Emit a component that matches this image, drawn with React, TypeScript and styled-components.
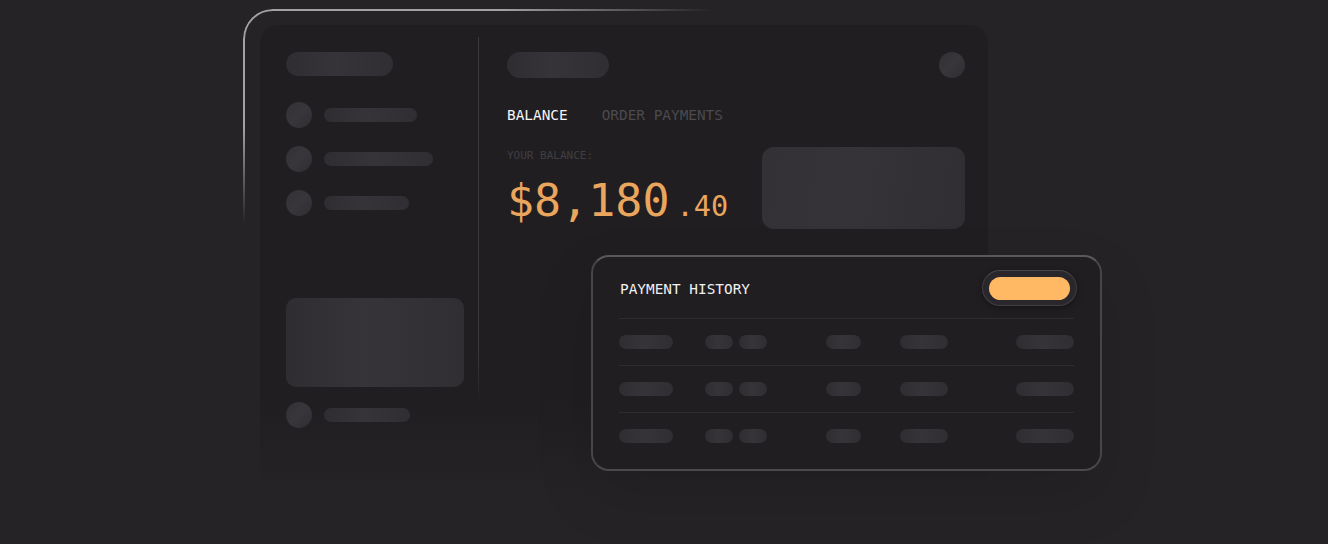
import React from "react";
import styled, { createGlobalStyle } from "styled-components";

const Global = createGlobalStyle`
  html, body { margin: 0; padding: 0; background: #252326; }
  body { font-family: "DejaVu Sans Mono", "Liberation Mono", monospace; }
  * { box-sizing: border-box; }
`;

const Stage = styled.div`
  position: relative;
  width: 1328px;
  height: 544px;
  overflow: hidden;
  background: #252326;
  padding: 9px 0 0 243px;
`;

const Frame = styled.div`
  position: relative;
  width: 762px;
  height: 520px;
  padding: 16px 17px 0 17px;
  border-radius: 30px;
  &::before {
    content: "";
    position: absolute;
    inset: 0;
    border-radius: 30px;
    border: 2px solid #a3a1a6;
    pointer-events: none;
    -webkit-mask-image: radial-gradient(ellipse 470px 215px at 0 0, #000 0%, #000 55%, transparent 100%);
    mask-image: radial-gradient(ellipse 470px 215px at 0 0, #000 0%, #000 55%, transparent 100%);
  }
`;

const Panel = styled.div`
  display: flex;
  width: 728px;
  height: 470px;
  border-radius: 18px;
  background: linear-gradient(to bottom, #201e21 0%, #201e21 80%, #252326 100%);
`;

const Sidebar = styled.div`
  width: 218px;
  flex-shrink: 0;
  display: flex;
  flex-direction: column;
  align-items: flex-start;
  padding: 27px 0 0 26px;
`;

const Divider = styled.div`
  width: 1px;
  height: 370px;
  margin-top: 12px;
  background: linear-gradient(to bottom, #3c3a3e 0%, #3a383c 85%, rgba(58, 56, 60, 0) 100%);
`;

const Skel = styled.div<{ $w: number; $h: number; $r?: number }>`
  width: ${(p) => p.$w}px;
  height: ${(p) => p.$h}px;
  border-radius: ${(p) => (p.$r !== undefined ? p.$r : p.$h / 2)}px;
  flex-shrink: 0;
  background: linear-gradient(90deg, #2f2d31 0%, #363438 45%, #302e32 100%);
  filter: blur(0.6px);
`;

const Dot = styled.div`
  width: 26px;
  height: 26px;
  border-radius: 50%;
  flex-shrink: 0;
  background: linear-gradient(135deg, #333135 0%, #38363a 50%, #2f2d31 100%);
  filter: blur(0.5px);
`;

const NavItem = styled.div<{ $mb?: number }>`
  display: flex;
  align-items: center;
  gap: 12px;
  height: 26px;
  margin-bottom: ${(p) => p.$mb ?? 18}px;
`;

const SideTitle = styled(Skel)`
  margin-bottom: 26px;
`;

const SideBlock = styled(Skel)`
  margin-bottom: 15px;
`;

const Main = styled.div`
  flex: 1;
  display: flex;
  flex-direction: column;
  padding: 27px 23px 0 28px;
`;

const Header = styled.div`
  display: flex;
  justify-content: space-between;
  align-items: center;
  height: 26px;
`;

const Tabs = styled.div`
  display: flex;
  gap: 34px;
  margin-top: 29px;
`;

const Tab = styled.span<{ $active?: boolean }>`
  font-size: 14.4px;
  line-height: 17px;
  color: ${(p) => (p.$active ? "#f6f5f7" : "#4c4a4e")};
`;

const BalanceRow = styled.div`
  display: flex;
  justify-content: space-between;
  align-items: flex-start;
  margin-top: 23px;
`;

const BalanceInfo = styled.div`
  display: flex;
  flex-direction: column;
  padding-top: 2px;
`;

const Label = styled.span`
  font-size: 11px;
  line-height: 13px;
  color: #403e42;
`;

const Amount = styled.div`
  margin-top: 17px;
  line-height: 44px;
  color: #eaa65d;
  white-space: nowrap;
`;

const Whole = styled.span`
  font-size: 45px;
`;

const Cents = styled.span`
  font-size: 28.5px;
  margin-left: 7px;
`;

const BalanceCard = styled.div`
  width: 203px;
  height: 82px;
  border-radius: 12px;
  background: linear-gradient(100deg, #333135 0%, #353337 45%, #302e32 100%);
  filter: blur(0.5px);
`;

const HistoryCard = styled.div`
  position: absolute;
  left: 591px;
  top: 255px;
  width: 511px;
  height: 216px;
  border-radius: 18px;
  border: 2px solid;
  border-color: #5a585c #47454a #4b494d #47454a;
  background: #201e21;
  padding: 13px 26px 0 26px;
  box-shadow: 0 24px 60px rgba(0, 0, 0, 0.12);
`;

const HistoryHeader = styled.div`
  display: flex;
  justify-content: space-between;
  align-items: center;
  height: 36px;
  margin-right: -3px;
`;

const HistoryTitle = styled.span`
  font-size: 14.4px;
  line-height: 17px;
  color: #f1f0f2;
  margin: 2px 0 0 1px;
`;

const Ring = styled.div`
  width: 95px;
  height: 36px;
  border-radius: 18px;
  background: #29272b;
  border: 1.5px solid #403e42;
  border-top-color: #4a484c;
  display: flex;
  align-items: center;
  justify-content: center;
  box-shadow: 0 2px 6px rgba(0, 0, 0, 0.35);
`;

const OrangePill = styled.div`
  width: 81px;
  height: 23px;
  border-radius: 12px;
  background: #ffb964;
`;

const Table = styled.div`
  margin-top: 12px;
  display: flex;
  flex-direction: column;
`;

const Row = styled.div`
  display: grid;
  grid-template-columns: 86px 121px 74px 1fr auto;
  align-items: center;
  height: 47px;
  border-top: 1px solid #2e2c30;
`;

const Pair = styled.div`
  display: flex;
  gap: 6px;
`;

const rows = [0, 1, 2];

export default function App() {
  return (
    <>
      <Global />
      <Stage>
        <Frame>
          <Panel>
            <Sidebar>
              <SideTitle $w={107} $h={24} />
              <NavItem>
                <Dot />
                <Skel $w={93} $h={14} />
              </NavItem>
              <NavItem>
                <Dot />
                <Skel $w={109} $h={14} />
              </NavItem>
              <NavItem $mb={82}>
                <Dot />
                <Skel $w={85} $h={14} />
              </NavItem>
              <SideBlock $w={178} $h={89} $r={10} />
              <NavItem>
                <Dot />
                <Skel $w={86} $h={14} />
              </NavItem>
            </Sidebar>
            <Divider />
            <Main>
              <Header>
                <Skel $w={102} $h={26} />
                <Dot />
              </Header>
              <Tabs>
                <Tab $active>BALANCE</Tab>
                <Tab>ORDER PAYMENTS</Tab>
              </Tabs>
              <BalanceRow>
                <BalanceInfo>
                  <Label>YOUR BALANCE:</Label>
                  <Amount>
                    <Whole>$8,180</Whole>
                    <Cents>.40</Cents>
                  </Amount>
                </BalanceInfo>
                <BalanceCard />
              </BalanceRow>
            </Main>
          </Panel>
        </Frame>
        <HistoryCard>
          <HistoryHeader>
            <HistoryTitle>PAYMENT HISTORY</HistoryTitle>
            <Ring>
              <OrangePill />
            </Ring>
          </HistoryHeader>
          <Table>
            {rows.map((r) => (
              <Row key={r}>
                <Skel $w={54} $h={14} />
                <Pair>
                  <Skel $w={28} $h={14} />
                  <Skel $w={28} $h={14} />
                </Pair>
                <Skel $w={35} $h={14} />
                <Skel $w={48} $h={14} />
                <Skel $w={58} $h={14} />
              </Row>
            ))}
          </Table>
        </HistoryCard>
      </Stage>
    </>
  );
}
